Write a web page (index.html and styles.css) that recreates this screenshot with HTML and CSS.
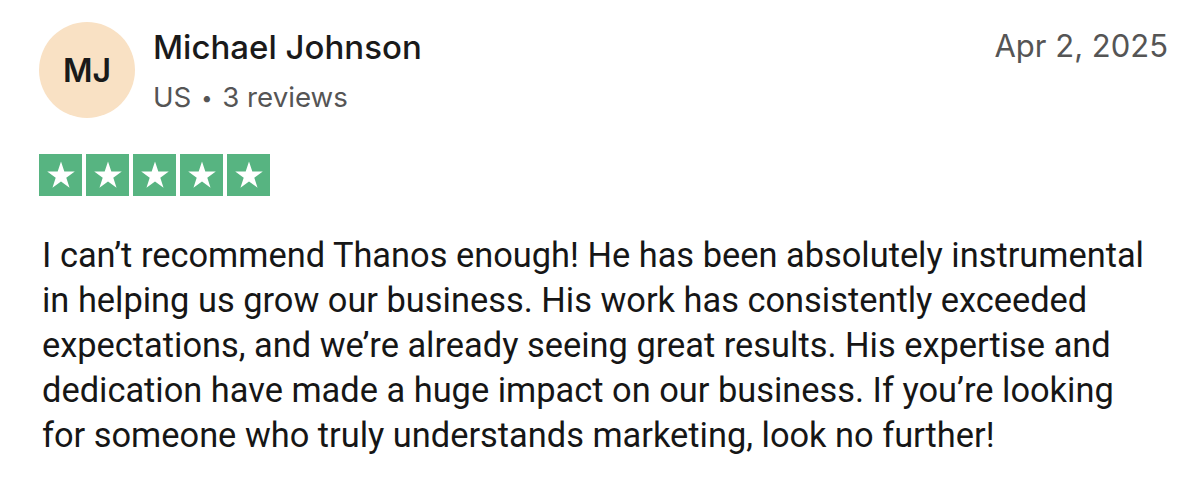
FILE: index.html
```html
<!DOCTYPE html>
<html lang="en">
<head>
  <meta charset="UTF-8">
  <title>Review</title>
  <link rel="stylesheet" href="styles.css">
</head>
<body>
  <div class="review">
    <div class="review-head">
      <div class="avatar">MJ</div>
      <div class="reviewer">
        <div class="reviewer-name">Michael Johnson</div>
        <div class="reviewer-meta">US <span class="dot">&bull;</span> 3 reviews</div>
      </div>
      <div class="review-date">Apr 2, 2025</div>
    </div>

    <div class="stars">
      <span class="star"><svg viewBox="0 0 24 24"><path d="M12 3.5l2.1 6.3h6.6l-5.35 3.9 2.05 6.3L12 16.1l-5.4 3.9 2.05-6.3L3.3 9.8h6.6z"/></svg></span>
      <span class="star"><svg viewBox="0 0 24 24"><path d="M12 3.5l2.1 6.3h6.6l-5.35 3.9 2.05 6.3L12 16.1l-5.4 3.9 2.05-6.3L3.3 9.8h6.6z"/></svg></span>
      <span class="star"><svg viewBox="0 0 24 24"><path d="M12 3.5l2.1 6.3h6.6l-5.35 3.9 2.05 6.3L12 16.1l-5.4 3.9 2.05-6.3L3.3 9.8h6.6z"/></svg></span>
      <span class="star"><svg viewBox="0 0 24 24"><path d="M12 3.5l2.1 6.3h6.6l-5.35 3.9 2.05 6.3L12 16.1l-5.4 3.9 2.05-6.3L3.3 9.8h6.6z"/></svg></span>
      <span class="star"><svg viewBox="0 0 24 24"><path d="M12 3.5l2.1 6.3h6.6l-5.35 3.9 2.05 6.3L12 16.1l-5.4 3.9 2.05-6.3L3.3 9.8h6.6z"/></svg></span>
    </div>

    <p class="review-text">I can’t recommend Thanos enough! He has been absolutely instrumental in helping us grow our business. His work has consistently exceeded expectations, and we’re already seeing great results. His expertise and dedication have made a huge impact on our business. If you’re looking for someone who truly understands marketing, look no further!</p>
  </div>
</body>
</html>
```

FILE: styles.css
```css
body {
  margin: 0;
  background: #ffffff;
  font-family: Inter, "Liberation Sans", sans-serif;
  color: #1a1a1a;
}
.review {
  padding: 22px 32px 0 39px;
}
.review-head {
  display: flex;
  align-items: flex-start;
}
.avatar {
  width: 96px;
  height: 96px;
  border-radius: 50%;
  background-color: #f9e1c4;
  color: #1a1a1a;
  font-size: 32px;
  font-weight: 600;
  display: flex;
  align-items: center;
  justify-content: center;
  flex-shrink: 0;
}
.reviewer {
  margin-left: 18px;
  flex: 1;
}
.reviewer-name {
  font-size: 33px;
  font-weight: 500;
  line-height: 48px;
  margin-top: 1px;
  color: #1a1a1a;
}
.reviewer-meta {
  font-size: 27.7px;
  line-height: 40px;
  margin-top: 6px;
  color: #555555;
}
.reviewer-meta .dot {
  font-size: 20px;
  vertical-align: 2px;
  margin: 0 2px;
}
.review-date {
  font-size: 31px;
  line-height: 48px;
  color: #555555;
}
.stars {
  display: flex;
  gap: 4px;
  margin-top: 36px;
}
.star {
  width: 43px;
  height: 42px;
  background-color: #57b481;
  display: flex;
  align-items: center;
  justify-content: center;
}
.star svg {
  width: 38px;
  height: 38px;
  fill: #ffffff;
}
.review-text {
  font-family: Roboto, "Liberation Sans", sans-serif;
  font-size: 34.4px;
  line-height: 45px;
  color: #161616;
  margin: 37px 0 0 3px;
  max-width: 1120px;
}
```
